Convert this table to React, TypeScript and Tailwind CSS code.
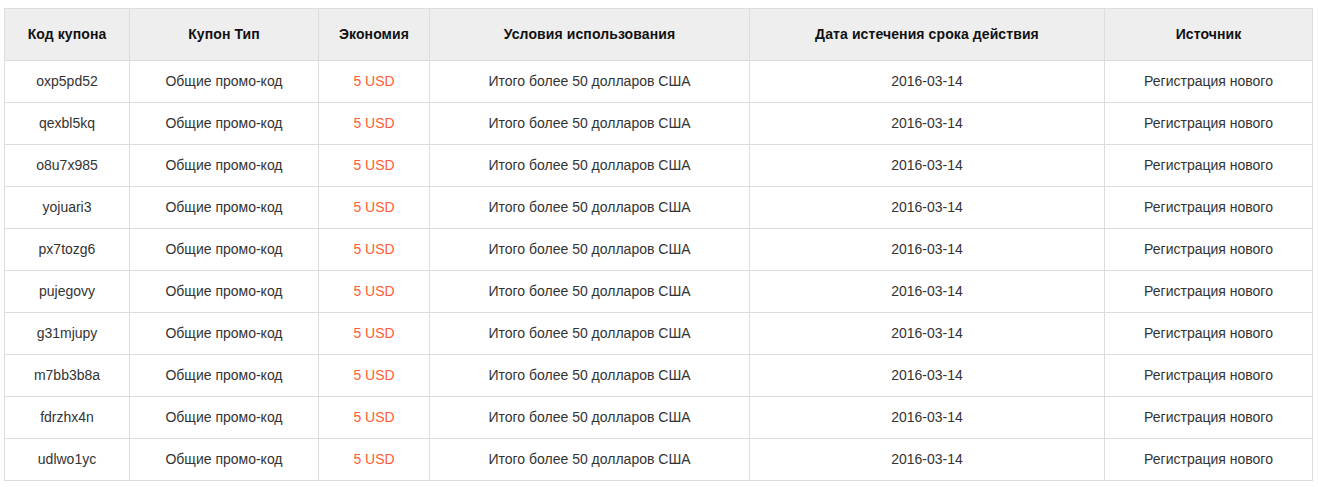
const codes = [
  "oxp5pd52",
  "qexbl5kq",
  "o8u7x985",
  "yojuari3",
  "px7tozg6",
  "pujegovy",
  "g31mjupy",
  "m7bb3b8a",
  "fdrzhx4n",
  "udlwo1yc",
];

const headers = [
  "Код купона",
  "Купон Тип",
  "Экономия",
  "Условия использования",
  "Дата истечения срока действия",
  "Источник",
];

export default function App() {
  return (
    <div className="pt-2 pl-1 bg-white min-h-screen font-['Liberation_Sans',Arial,sans-serif]">
      <table className="table-fixed border-collapse w-[1308px] text-[14px] text-center">
        <colgroup>
          <col className="w-[125px]" />
          <col className="w-[189px]" />
          <col className="w-[111px]" />
          <col className="w-[320px]" />
          <col className="w-[355px]" />
          <col className="w-[208px]" />
        </colgroup>
        <thead>
          <tr className="h-[52px] bg-[#eeeeee]">
            {headers.map((h) => (
              <th key={h} className="border border-[#dddddd] font-bold text-[#111] tracking-[0.1px]">
                {h}
              </th>
            ))}
          </tr>
        </thead>
        <tbody>
          {codes.map((code) => (
            <tr key={code} className="h-[42px] text-[#333]">
              <td className="border border-[#dddddd]">{code}</td>
              <td className="border border-[#dddddd]">Общие промо-код</td>
              <td className="border border-[#dddddd] text-[#ff5c33]">5 USD</td>
              <td className="border border-[#dddddd]">Итого более 50 долларов США</td>
              <td className="border border-[#dddddd]">2016-03-14</td>
              <td className="border border-[#dddddd]">Регистрация нового</td>
            </tr>
          ))}
        </tbody>
      </table>
    </div>
  );
}
